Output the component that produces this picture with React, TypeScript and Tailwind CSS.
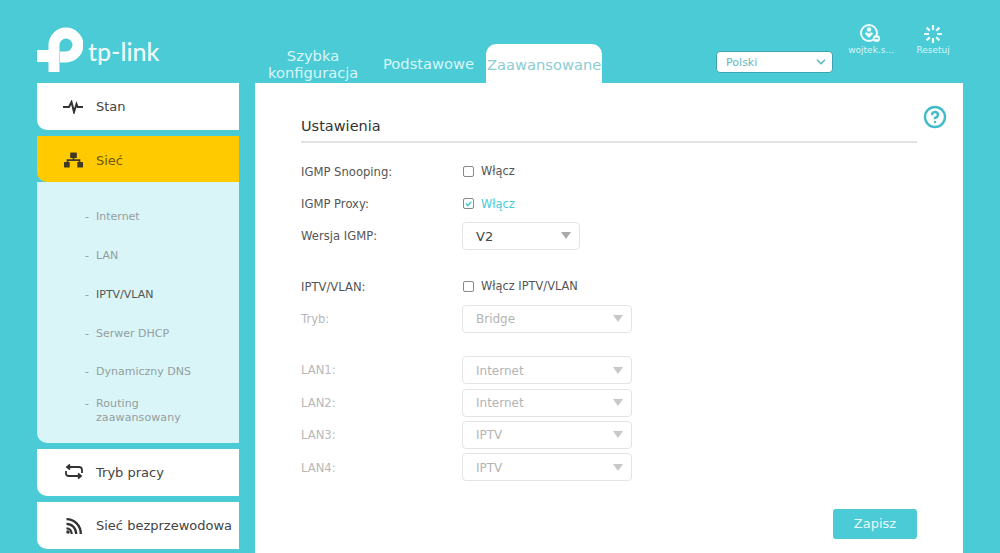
import { ChevronDown, CircleHelp } from "lucide-react";
import type { ReactNode } from "react";

function Logo() {
  return (
    <div className="flex items-start w-[202px] h-[83px] pt-[27px]">
      <svg viewBox="0 0 46 46" className="w-[46px] h-[46px] shrink-0" fill="none">
        <path d="M17 45V18A12 12 0 1 1 29 30H23" stroke="white" strokeWidth="11" />
        <rect x="0" y="23" width="12" height="12" fill="white" />
      </svg>
      <span className="ml-[5px] mt-[12px] text-[25px] leading-[25px] font-medium text-[#f0fcfd] font-['Lato',sans-serif]">
        tp-link
      </span>
    </div>
  );
}

function SelectBox({
  value,
  wide = false,
  disabled = false,
}: {
  value: string;
  wide?: boolean;
  disabled?: boolean;
}) {
  return (
    <div
      className={`flex items-center justify-between h-[28px] rounded-[4px] border border-[#e4e4e4] pl-[13px] pr-[8px] ${
        wide ? "w-[170px]" : "w-[118px]"
      } ${disabled ? "text-[#b4b4b4]" : "text-[#444]"}`}
    >
      <span className={`pt-[1px] ${disabled ? "text-[12px]" : "text-[13px]"}`}>{value}</span>
      <span
        className={`w-0 h-0 border-x-[5px] border-x-transparent border-t-[7px] ${
          disabled ? "border-t-[#c8c8c8]" : "border-t-[#aaa]"
        }`}
      />
    </div>
  );
}

function Row({
  label,
  disabled = false,
  className = "",
  children,
}: {
  label: string;
  disabled?: boolean;
  className?: string;
  children: ReactNode;
}) {
  return (
    <div className={`flex items-center h-[32.4px] ${className}`}>
      <span className={`w-[161px] shrink-0 pt-[2px] text-[11.6px] ${disabled ? "text-[#b8b8b8]" : "text-[#555]"}`}>
        {label}
      </span>
      {children}
    </div>
  );
}

function Check({ label, checked = false }: { label: string; checked?: boolean }) {
  return (
    <div className="flex items-center">
      <span className="flex items-center justify-center ml-[1px] w-[11px] h-[11px] rounded-[2px] border border-[#888] bg-white">
        {checked && (
          <svg viewBox="0 0 10 10" className="w-[9px] h-[9px]" fill="none">
            <path d="M2 5l2.2 2.2L8 3" stroke="#4acbd6" strokeWidth="1.8" />
          </svg>
        )}
      </span>
      <span className={`ml-[7px] pt-[1px] text-[11.4px] ${checked ? "text-[#4acbd6]" : "text-[#555]"}`}>{label}</span>
    </div>
  );
}

function SideItem({
  icon,
  label,
  active = false,
}: {
  icon: ReactNode;
  label: string;
  active?: boolean;
}) {
  return (
    <div
      className={`flex items-center rounded-bl-[10px] pl-[26px] text-[13px] ${
        active ? "h-[46px] bg-[#ffcb00] text-[#6e5a10]" : "h-[47px] bg-white text-[#444]"
      }`}
    >
      <span className={`flex items-center justify-center w-[20px] h-[20px] shrink-0 ${active ? "mt-[1px]" : ""}`}>
        {icon}
      </span>
      <span className={`ml-[13px] whitespace-nowrap ${active ? "pt-[3px]" : "pt-[1px]"}`}>{label}</span>
    </div>
  );
}

const subItems = ["Internet", "LAN", "IPTV/VLAN", "Serwer DHCP", "Dynamiczny DNS"];

export default function App() {
  return (
    <div className="h-[553px] overflow-hidden bg-[#4acbd6] font-['DejaVu_Sans',sans-serif]">
      <header className="flex h-[83px] pl-[37px]">
        <Logo />
        <nav className="flex items-end text-[14.7px] leading-[17px] text-[#d9f6f8]">
          <div className="w-[90px] ml-[29px] mb-[2px] text-center">
            Szybka
            <br />
            konfiguracja
          </div>
          <div className="ml-[25px] mb-[11px]">Podstawowe</div>
          <div className="flex items-center justify-center w-[116px] h-[39px] ml-[12px] rounded-t-[10px] bg-white text-[#8ccdd4] pt-[2px]">
            Zaawansowane
          </div>
        </nav>
        <div className="flex items-start ml-[114px]">
          <div className="flex items-center justify-between w-[117px] h-[22px] mt-[51px] rounded-[4px] border border-[#3aa5b0] bg-white pl-[9px] pr-[4px] text-[11px] text-[#62b9c3]">
            <span className="pt-[2px]">Polski</span>
            <ChevronDown size={14} strokeWidth={3} className="text-[#62b9c3]" />
          </div>
          <div className="flex flex-col items-center w-[60px] ml-[8px] mt-[23px] text-[9px] leading-[12px] text-[#d9f6f8]">
            <svg viewBox="0 0 22 22" className="w-[22px] h-[22px] -translate-x-[1px]" fill="none">
              <circle cx="10" cy="10" r="8" stroke="#eefbfc" strokeWidth="2" />
              <circle cx="10" cy="6.500" r="2.300" fill="#eefbfc" />
              <path d="M10 15L6.300 11.200C5.800 10.200 6.500 9.500 7.500 9.500 8.600 9.500 9.400 10.100 10 10.700 10.600 10.100 11.400 9.500 12.500 9.500 13.500 9.500 14.200 10.200 13.700 11.200Z" fill="#eefbfc" />
              <circle cx="17.500" cy="15.500" r="3.600" fill="#eefbfc" />
              <path d="M15.700 15.500h3.600" stroke="#4acbd6" strokeWidth="1.300" />
            </svg>
            <span className="-mt-[1px]">wojtek.s...</span>
          </div>
          <div className="flex flex-col items-center w-[50px] ml-[7px] mt-[24px] text-[9px] leading-[12px] text-[#d9f6f8]">
            <svg viewBox="0 0 20 20" className="w-[20px] h-[20px]" fill="none" stroke="#eefbfc" strokeWidth="2.200">
              <path d="M10 1v5M10 14v5M1 10h5M14 10h5M3.600 3.600l3.200 3.200M13.200 13.200l3.200 3.200M3.600 16.400l3.200-3.200M13.200 6.800l3.200-3.200" />
            </svg>
            <span>Resetuj</span>
          </div>
        </div>
      </header>

      <div className="flex pl-[37px]">
        <aside className="flex flex-col gap-[6px] w-[202px] shrink-0">
          <SideItem
            label="Stan"
            icon={
              <svg viewBox="0 0 20 14" className="w-[20px] h-[14px]" fill="none" stroke="#333" strokeWidth="2">
                <path d="M0 7h6L8.500 2l2.500 10L13.500 4l1.200 3H20" />
              </svg>
            }
          />
          <div>
            <SideItem
              active
              label="Sieć"
              icon={
                <svg viewBox="0 0 20 16" className="w-[19px] h-[16px]" fill="#3f3a26">
                  <rect x="6.500" y="0" width="7" height="6" rx="0.600" />
                  <rect x="0" y="10" width="6" height="6" rx="0.600" />
                  <rect x="14" y="10" width="6" height="6" rx="0.600" />
                  <path d="M9.100 5h1.800v2.200h6.300v3.500h-1.800V9H4.600v1.700H2.800V7.200h6.300z" />
                </svg>
              }
            />
            <div className="h-[261px] rounded-bl-[10px] bg-[#d9f5f7] pt-[16px] pl-[48px] text-[11px] text-[#939ea0]">
              {subItems.map((item) => (
                <div key={item} className="flex items-center h-[38.8px]">
                  <span className="w-[11px]">-</span>
                  <span className={item === "IPTV/VLAN" ? "text-[#555]" : ""}>{item}</span>
                </div>
              ))}
              <div className="flex mt-[5px] leading-[14px]">
                <span className="w-[11px]">-</span>
                <span className="tracking-[0.1px]">
                  Routing
                  <br />
                  zaawansowany
                </span>
              </div>
            </div>
          </div>
          <SideItem
            label="Tryb pracy"
            icon={
              <svg viewBox="0 0 18 17" className="w-[18px] h-[17px] ml-[2px] shrink-0" fill="none" stroke="#333" strokeWidth="1.800">
                <path d="M2 3H14Q17 3 17 6V9M5 0.500L2 3L5 5.500" />
                <path d="M1 7V9.500Q1 12 4 12H16M13 9.500L16 12L13 14.500" />
              </svg>
            }
          />
          <SideItem
            label="Sieć bezprzewodowa"
            icon={
              <svg viewBox="0 0 16 16" className="w-[16px] h-[16px] ml-[2px] shrink-0" fill="none" stroke="#333" strokeWidth="2.300">
                <path d="M0.500 1.200C8.500 1.200 14.800 7.500 14.800 16M0.500 5.800C6 5.800 10.200 10.200 10.200 16M0.500 10.400C3.500 10.400 5.700 12.700 5.700 16" />
                <circle cx="2" cy="14" r="1.800" fill="#333" stroke="none" />
              </svg>
            }
          />
        </aside>

        <main className="w-[708px] h-[470px] ml-[16px] bg-white px-[46px] pt-[34px]">
          <div className="relative h-[26px] border-b-2 border-[#e2e2e2] text-[14.5px] leading-[18px] text-[#333]">
            Ustawienia
            <CircleHelp size={24} strokeWidth={2.400} className="absolute right-[-30px] top-[-12px] text-[#42bcc9]" />
          </div>
          <div className="mt-[12px]">
            <Row label="IGMP Snooping:">
              <Check label="Włącz" />
            </Row>
            <Row label="IGMP Proxy:">
              <Check label="Włącz" checked />
            </Row>
            <Row label="Wersja IGMP:">
              <SelectBox value="V2" />
            </Row>
            <Row label="IPTV/VLAN:" className="mt-[18px]">
              <Check label="Włącz IPTV/VLAN" />
            </Row>
            <Row label="Tryb:" disabled>
              <SelectBox value="Bridge" wide disabled />
            </Row>
            <Row label="LAN1:" disabled className="mt-[19px]">
              <SelectBox value="Internet" wide disabled />
            </Row>
            <Row label="LAN2:" disabled>
              <SelectBox value="Internet" wide disabled />
            </Row>
            <Row label="LAN3:" disabled>
              <SelectBox value="IPTV" wide disabled />
            </Row>
            <Row label="LAN4:" disabled>
              <SelectBox value="IPTV" wide disabled />
            </Row>
          </div>
          <div className="flex justify-end mt-[25px]">
            <button
              type="button"
              className="w-[84px] h-[30px] rounded-[3px] bg-[#4acbd6] text-[13px] text-[#e6fbfc]"
            >
              Zapisz
            </button>
          </div>
        </main>
      </div>
    </div>
  );
}
